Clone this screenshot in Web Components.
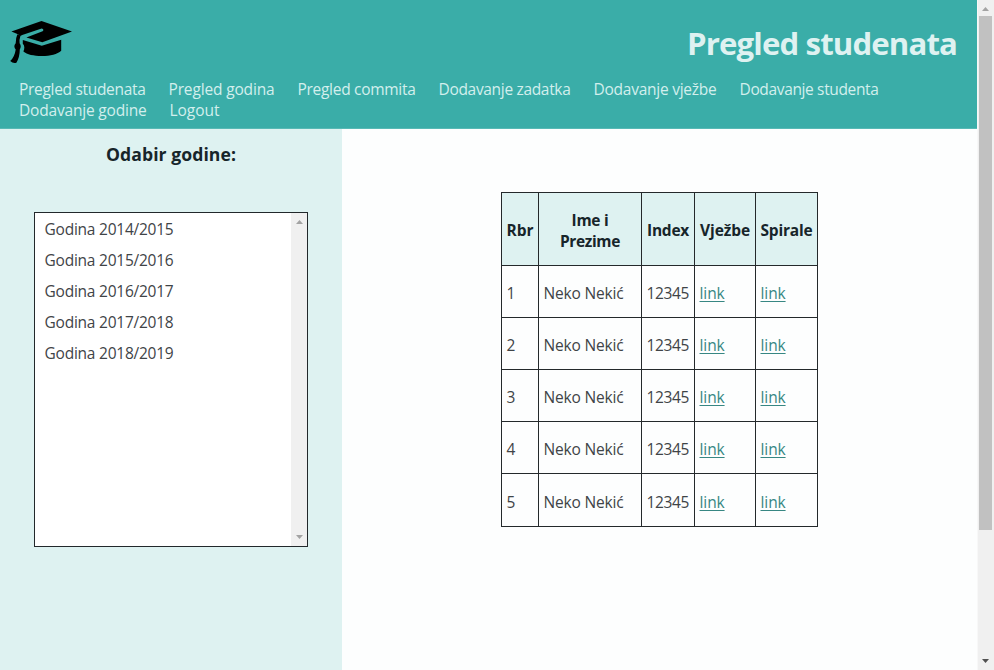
<!DOCTYPE html>
<html lang="bs">
<head>
<meta charset="utf-8">
<title>Pregled studenata</title>
<style>
html,body{margin:0;height:100%;overflow:hidden}
body{font-family:"Open Sans","Noto Sans",sans-serif;font-size:15.5px;line-height:21px;color:#3f4447;background:#fdfefe}
</style>
</head>
<body>
<student-page></student-page>
<script>
const define = (name, html, after) => customElements.define(name, class extends HTMLElement {
  connectedCallback() {
    if (this.shadowRoot) return;
    const t = document.createElement('template');
    t.innerHTML = html;
    this.attachShadow({mode: 'open'}).append(t.content.cloneNode(true));
    if (after) after(this, this.shadowRoot);
  }
});

// Text set to a given advance width by even tracking.
define('fit-text', `<style>:host{display:inline-block;white-space:nowrap}span{display:inline-block}</style><span><slot></slot></span>`, (el, root) => {
  const s = root.querySelector('span'), w = +el.getAttribute('w');
  s.style.letterSpacing = (w - s.getBoundingClientRect().width) / el.textContent.length + 'px';
  el.style.width = w + 'px';
});

define('cap-logo', `<style>:host{display:block;width:64px;height:46px}svg{display:block}</style>
<svg width="64" height="46" viewBox="10 19 64 46">
<path d="M11.4 31.6 41.5 21.1 72 31.5 42.3 42.2 26.4 37.4 42.6 31.2Q44 30.2 43 29L41.6 28.6 26 33.8Q21.5 35.2 19.8 36.2L18 34.2Z"/>
<path d="M22.8 40.1 41.8 45.7 61.2 39.7V50.8C57.5 54.4 50.2 56.1 42 56.1 33.5 56.1 27 54.6 23.4 51.6 24.8 48.5 24.7 45.5 22.8 43.8Z"/>
<path d="M17.4 34.2 20.4 36Q19.2 39.5 19.6 43.3 21.8 46.3 19.8 49.5 19.7 57.3 16.4 62.7 13.4 64 10.2 61.1 14.7 56.8 15.7 49.5 13 46.4 15.7 43.3 15.6 38 17.4 34.2Z"/>
</svg>`);

define('page-header', `<style>
:host{display:block;box-sizing:border-box;height:129px;background:#3aada8;color:#def2f1;border-bottom:1px solid #57b9b5}
.top{display:flex;justify-content:space-between;height:78px;padding:19px 20px 0 10px;box-sizing:border-box}
h1{margin:3px 0 0;font-size:31.2px;line-height:43px;font-weight:700}
nav{display:flex;flex-wrap:wrap;padding:1px 60px 0 19px;column-gap:23px;color:#d3efed}
</style><div class="top"><cap-logo></cap-logo><h1><fit-text w="270">Pregled studenata</fit-text></h1></div>
<nav><fit-text w="126.5">Pregled studenata</fit-text><fit-text w="106">Pregled godina</fit-text><fit-text w="118">Pregled commita</fit-text><fit-text w="132">Dodavanje zadatka</fit-text><fit-text w="123">Dodavanje vježbe</fit-text><fit-text w="139">Dodavanje studenta</fit-text><fit-text w="127.5">Dodavanje godine</fit-text><fit-text w="50">Logout</fit-text></nav>`);

const arrow = (up, c) => `<svg width="7" height="4" viewBox="0 0 7 4"><path fill="${c}" d="${up ? 'M0 4 3.5 0 7 4Z' : 'M0 0H7L3.5 4Z'}"/></svg>`;

define('year-list', `<style>
:host{display:flex;box-sizing:border-box;width:274px;height:335px;border:1px solid #22282b;background:#fff}
.items{flex:1;padding:6px 0 0 9.5px;display:flex;flex-direction:column;gap:10.1px}
.bar{width:16px;background:#f0f0f0;display:flex;flex-direction:column;justify-content:space-between;align-items:center;padding:7px 0;box-sizing:border-box}
svg{display:block}
</style><div class="items">${[2014,2015,2016,2017,2018].map(y => `<fit-text w="129">Godina ${y}/${y + 1}</fit-text>`).join('')}</div>
<div class="bar">${arrow(true,'#a3a3a3')}${arrow(false,'#a3a3a3')}</div>`);

define('year-panel', `<style>
:host{display:flex;flex-direction:column;align-items:center;width:342px;background:#def2f1;padding:15px 0 0;box-sizing:border-box}
h2{margin:0 0 47px;font-size:17.6px;line-height:21px;font-weight:700;color:#17252a}
</style><h2><fit-text w="130">Odabir godine:</fit-text></h2><year-list></year-list>`);

define('student-table', `<style>
:host{display:grid;grid-template-columns:36px 102px 52px 60px 61px;grid-template-rows:72px 51px 51px 51px 51px 52px;gap:1px;padding:1px;background:#24292b}
div{background:#fdfefe;display:flex;align-items:center;padding:4px 0 0 5px}
.h{background:#def2f1;color:#17252a;font-weight:700;text-align:center;padding:3px 0 0 1px;justify-content:center;flex-direction:column}
.l{color:#378783;text-decoration:underline;text-underline-offset:1.5px;letter-spacing:-.1px}
</style>
<div class="h"><fit-text w="27">Rbr</fit-text></div><div class="h"><fit-text w="37">Ime i</fit-text><fit-text w="60">Prezime</fit-text></div><div class="h"><fit-text w="42">Index</fit-text></div><div class="h"><fit-text w="50">Vježbe</fit-text></div><div class="h"><fit-text w="52">Spirale</fit-text></div>
${[1,2,3,4,5].map(n => `<div>${n}</div><div><fit-text w="80">Neko Nekić</fit-text></div><div><fit-text w="42.5">12345</fit-text></div><div><a class="l">link</a></div><div><a class="l">link</a></div>`).join('')}`);

define('page-scrollbar', `<style>
:host{display:flex;flex-direction:column;align-items:center;width:15px;background:#f0f0f0;border-left:1px solid #f8f8f8;padding:7px 1px 7px 0;box-sizing:content-box}
svg{display:block}
i{width:13px;height:514px;background:#c1c1c1;margin-top:5px}
.d{margin-top:auto}
</style>${arrow(true,'#a3a3a3')}<i></i><div class="d">${arrow(false,'#505050')}</div>`);

define('student-page', `<style>
:host{display:flex;height:670px;width:994px}
.page{flex:1;display:flex;flex-direction:column}
.body{flex:1;display:flex}
main{flex:1;display:flex;justify-content:center;align-items:flex-start;padding:63px 1px 0 0}
</style><div class="page"><page-header></page-header><div class="body"><year-panel></year-panel><main><student-table></student-table></main></div></div><page-scrollbar></page-scrollbar>`);
</script>
</body>
</html>
